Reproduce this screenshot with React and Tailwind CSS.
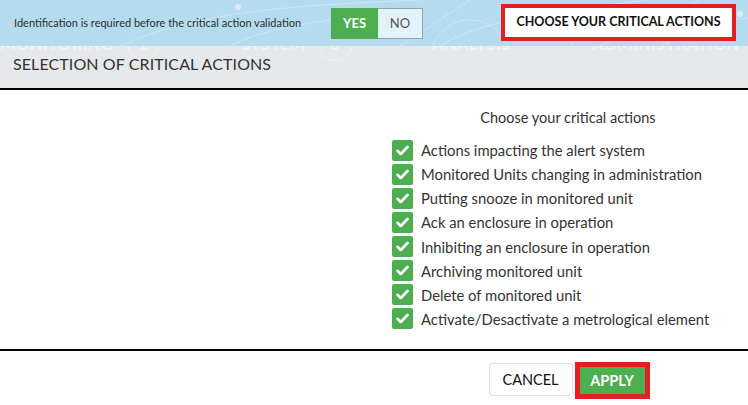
import React from 'react';

const actions = [
  'Actions impacting the alert system',
  'Monitored Units changing in administration',
  'Putting snooze in monitored unit',
  'Ack an enclosure in operation',
  'Inhibiting an enclosure in operation',
  'Archiving monitored unit',
  'Delete of monitored unit',
  'Activate/Desactivate a metrological element',
];

const Check = () => (
  <span className="w-[21px] h-[21px] rounded-[2px] bg-[#4cae4f] flex items-center justify-center shrink-0">
    <svg width="13" height="11" viewBox="0 0 13 11" fill="none">
      <path d="M1.5 5.8 L4.8 9 L11.5 2" stroke="white" strokeWidth="2.6" strokeLinecap="round" strokeLinejoin="round" />
    </svg>
  </span>
);

const Network = () => (
  <svg className="absolute inset-0 w-full h-full" viewBox="0 0 748 46" preserveAspectRatio="none">
    <g stroke="#ffffff" strokeOpacity="0.3" strokeWidth="1" fill="none">
      <path d="M120 46 C 200 10, 300 5, 420 0" />
      <path d="M400 46 L 470 0" />
      <path d="M440 46 C 480 20, 560 10, 650 0" />
      <path d="M600 46 L 700 0" />
      <path d="M660 46 C 690 30, 720 20, 748 18" />
      <path d="M230 46 C 260 30, 300 25, 330 20" />
      <circle cx="470" cy="60" r="40" />
      <circle cx="620" cy="70" r="55" />
    </g>
    <circle cx="238" cy="7" r="3" fill="#ffffff" fillOpacity="0.5" />
    <circle cx="740" cy="14" r="3" fill="#ffffff" fillOpacity="0.5" />
  </svg>
);

export default function App() {
  return (
    <div className="w-[748px] h-[405px] bg-white overflow-hidden font-['Lato','Noto_Sans',sans-serif] text-[#333]">
      <div className="relative h-[90px] bg-[#e6e8ea] border-b-2 border-black">
        <div className="relative z-10 h-[46px] bg-[#b5dbee] flex items-center overflow-hidden">
          <Network />
          <span className="relative ml-[14px] w-[287px] text-[11px] text-[#2a2f33] whitespace-nowrap">
            Identification is required before the critical action validation
          </span>
          <div className="relative ml-[30px] flex h-[31px] mt-[1px]">
            <span className="w-[47px] bg-[#4cae4f] text-white font-bold text-[13px] flex items-center justify-center">YES</span>
            <span className="w-[45px] bg-[#e2f3fb] border border-[#8fa3ad] border-l-0 text-[#555] text-[13px] flex items-center justify-center">NO</span>
          </div>
          <div className="relative ml-[78px] w-[235px] h-[37px] border-4 border-[#e3201f] bg-white flex items-center justify-center text-[12.5px] font-bold text-[#111] mb-[2px]">
            CHOOSE YOUR CRITICAL ACTIONS
          </div>
        </div>
        <div className="flex items-center -mt-[12px] h-[20px] text-[17px] font-bold text-white/50 whitespace-nowrap">
          <span>MONITORING</span>
          <span className="ml-[14px] w-[32px] h-[32px] rounded-full border border-white/40 flex items-center justify-center">1</span>
          <span className="ml-[82px]">SYSTEM</span>
          <span className="ml-[12px] w-[34px] h-[34px] rounded-full border border-white/40 flex items-center justify-center">3</span>
          <span className="ml-[80px]">ANALYSIS</span>
          <span className="ml-[82px]">ADMINISTRATION</span>
        </div>
        <div className="relative z-10 ml-[13px] mt-[-2px] text-[16px] text-[#333] tracking-[0.1px]">
          SELECTION OF CRITICAL ACTIONS
        </div>
      </div>

      <div className="flex h-[261px] border-b-2 border-black">
        <div className="w-[390px]" />
        <div className="flex-1 flex flex-col">
          <div className="mt-[17px] text-center text-[14.5px] text-[#333] pr-[2px]">Choose your critical actions</div>
          <ul className="mt-[11px] ml-[2px] flex flex-col gap-[3.1px]">
            {actions.map((a) => (
              <li key={a} className="flex items-center gap-[8px] h-[21px] text-[14.8px] text-[#333]">
                <Check />
                <span>{a}</span>
              </li>
            ))}
          </ul>
        </div>
      </div>

      <div className="flex">
        <div className="w-[390px]" />
        <div className="flex-1 flex justify-center gap-[2px] mt-[11px]">
          <button className="w-[84px] h-[33px] mt-[1px] border border-[#ddd] rounded-[3px] bg-white text-[14.5px] text-[#111]">
            CANCEL
          </button>
          <div className="w-[75px] h-[37px] border-[5px] border-[#e3201f] flex">
            <button className="flex-1 bg-[#4cae4f] text-white font-bold text-[14.5px]">APPLY</button>
          </div>
        </div>
      </div>
    </div>
  );
}
